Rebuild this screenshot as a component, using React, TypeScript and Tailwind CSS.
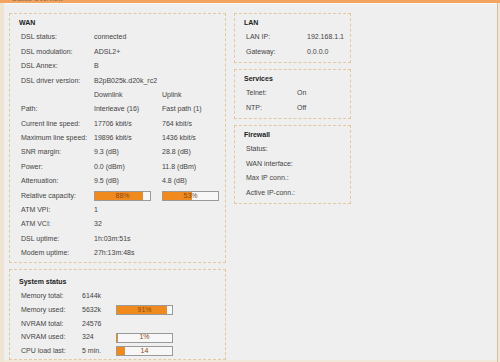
import React from "react"

type Row = { label: string; value?: React.ReactNode; value2?: React.ReactNode }

const wanRows: Row[] = [
  { label: "DSL status:", value: "connected" },
  { label: "DSL modulation:", value: "ADSL2+" },
  { label: "DSL Annex:", value: "B" },
  { label: "DSL driver version:", value: "B2pB025k.d20k_rc2" },
  { label: "", value: "Downlink", value2: "Uplink" },
  { label: "Path:", value: "Interleave (16)", value2: "Fast path (1)" },
  { label: "Current line speed:", value: "17706 kbit/s", value2: "764 kbit/s" },
  { label: "Maximum line speed:", value: "19896 kbit/s", value2: "1436 kbit/s" },
  { label: "SNR margin:", value: "9.3 (dB)", value2: "28.8 (dB)" },
  { label: "Power:", value: "0.0 (dBm)", value2: "11.8 (dBm)" },
  { label: "Attenuation:", value: "9.5 (dB)", value2: "4.8 (dB)" },
  { label: "Relative capacity:", value: <Bar pct={88} text="88%" />, value2: <Bar pct={53} text="53%" /> },
  { label: "ATM VPI:", value: "1" },
  { label: "ATM VCI:", value: "32" },
  { label: "DSL uptime:", value: "1h:03m:51s" },
  { label: "Modem uptime:", value: "27h:13m:48s" },
]

const sysRows: Row[] = [
  { label: "Memory total:", value: "6144k" },
  { label: "Memory used:", value: "5632k", value2: <Bar pct={91} text="91%" /> },
  { label: "NVRAM total:", value: "24576" },
  { label: "NVRAM used:", value: "324", value2: <Bar pct={1} text="1%" /> },
  { label: "CPU load last:", value: "5 min.", value2: <Bar pct={14} text="14" /> },
]

function Bar({ pct, text }: { pct: number; text: string }) {
  return (
    <div className="relative w-[57px] h-[10px] border border-[#9a9a9a] bg-[#f7f7f7]">
      <div className="h-full bg-[#f08a1e]" style={{ width: `${pct}%` }} />
      <div className="absolute inset-0 flex items-center justify-center text-[7px] text-[#8a4a10]">{text}</div>
    </div>
  )
}

function Box({ title, children, className = "" }: { title: string; children: React.ReactNode; className?: string }) {
  return (
    <div className={`border border-dashed border-[#e2c7a0] pl-[9px] pr-2 ${className}`}>
      <div className="h-[14.4px] flex items-center font-bold text-[#222]">{title}</div>
      {children}
    </div>
  )
}

function Rows({ rows, labelW, valW, rowH = "h-[14.4px]" }: { rows: Row[]; labelW: string; valW: string; rowH?: string }) {
  return (
    <div className="pl-[2px]">
      {rows.map((r, i) => (
        <div key={i} className={`flex items-center ${rowH}`}>
          <div className={`${labelW} shrink-0`}>{r.label}</div>
          <div className={`${valW} shrink-0`}>{r.value}</div>
          <div>{r.value2}</div>
        </div>
      ))}
    </div>
  )
}

export default function App() {
  return (
    <div className="w-[500px] h-[362px] overflow-hidden bg-[#f1e8da] flex flex-col text-[7px] text-[#444]" style={{ fontFamily: '"Liberation Sans", Arial, sans-serif' }}>
      {/* header strip, mostly scrolled off */}
      <div className="h-[3px] bg-[#f2a460] overflow-hidden shrink-0">
        <div className="-mt-[5px] pl-[12px] text-[7px] leading-[8px] text-[#8a6a50]">Status Overview</div>
      </div>

      <div className="flex flex-1 min-h-0">
        <div className="w-[4px] shrink-0 bg-[#efe3d1]" />
        <div className="w-[493px] shrink-0 bg-[#efefef] border-t border-[#f6f8f2] pl-[5px] pt-[9px] mb-[2px] flex gap-[8px]">
          {/* left column */}
          <div className="w-[217px] shrink-0 flex flex-col gap-[6px]">
            <Box title="WAN" className="h-[250px] pt-[2px]">
              <Rows rows={wanRows} labelW="w-[73px]" valW="w-[68px]" />
            </Box>
            <Box title="System status" className="flex-1 min-h-0 pt-[5px]">
              <Rows rows={sysRows} labelW="w-[61px]" valW="w-[34px]" rowH="h-[13.8px]" />
            </Box>
          </div>

          {/* right column */}
          <div className="w-[117px] shrink-0 flex flex-col gap-[6px]">
            <Box title="LAN" className="h-[50px] pt-[2px]">
              <Rows rows={[{ label: "LAN IP:", value: "192.168.1.1" }, { label: "Gateway:", value: "0.0.0.0" }]} labelW="w-[61px]" valW="w-[45px]" />
            </Box>
            <Box title="Services" className="h-[50px] pt-[2px]">
              <Rows rows={[{ label: "Telnet:", value: "On" }, { label: "NTP:", value: "Off" }]} labelW="w-[51px]" valW="w-[40px]" />
            </Box>
            <Box title="Firewall" className="h-[79px] pt-[2px]">
              <Rows
                rows={[{ label: "Status:" }, { label: "WAN interface:" }, { label: "Max IP conn.:" }, { label: "Active IP-conn.:" }]}
                labelW="w-[90px]"
                valW="w-0"
              />
            </Box>
          </div>
        </div>
        <div className="w-[1px] shrink-0 bg-[#d8bf9c]" />
      </div>
    </div>
  )
}
